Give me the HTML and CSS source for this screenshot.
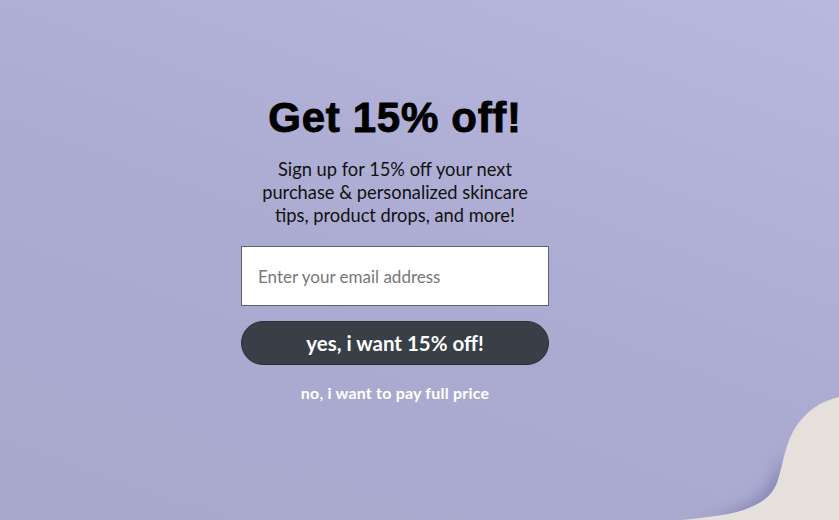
FILE: index.html
```html
<!DOCTYPE html>
<html lang="en">
<head>
    <meta charset="UTF-8">
    <meta name="viewport" content="width=device-width, initial-scale=1.0">
    <title>Get 15% off!</title>
    <link rel="stylesheet" href="styles.css">
</head>
<body>

<div class="backdrop">
    <svg class="swoosh" viewBox="0 0 200 140" width="200" height="140" aria-hidden="true">
        <defs>
            <filter id="soft" x="-30%" y="-30%" width="160%" height="160%">
                <feGaussianBlur stdDeviation="7"/>
            </filter>
        </defs>
        <!-- shade under the fold -->
        <path d="M146 70 C136 92 132 108 116 120 C98 132 80 136 60 140 L110 140 C130 132 142 118 146 100 Z" fill="#7676aa" opacity="0.7" filter="url(#soft)"/>
        <!-- cream card peeking in -->
        <path d="M200 17 C180 22 170 30 158 45 C146 62 144 85 139 100 C135 112 128 120 112 127 C95 135 70 137 43 140 L200 140 Z" fill="#e6e0dc"/>
    </svg>
</div>

<div class="signup">
    <h1>Get 15% off!</h1>
    <p class="pitch">Sign up for 15% off your next purchase &amp; personalized skincare tips, product drops, and more!</p>
    <form action="#" method="post">
        <input type="email" name="email" placeholder="Enter your email address">
        <button type="submit">yes, i want 15% off!</button>
    </form>
    <a href="#" class="decline">no, i want to pay full price</a>
</div>

</body>
</html>
```

FILE: styles.css
```css
body {
    margin: 0;
    padding: 0 49px 0 0;
    height: 100vh;
    overflow: hidden;
    font-family: 'Lato', 'Open Sans', sans-serif;
    background: linear-gradient(20deg, #a8a8cd 0%, #ababd1 45%, #b8b8de 100%);
    display: flex;
    justify-content: center;
    position: relative;
}
.backdrop {
    position: absolute;
    inset: 0;
    pointer-events: none;
}
.swoosh {
    position: absolute;
    right: 0;
    bottom: 0;
}
.signup {
    position: relative;
    width: 308px;
    padding-top: 93px;
    display: flex;
    flex-direction: column;
    align-items: center;
    text-align: center;
}
.signup h1 {
    margin: 0;
    font-family: 'Liberation Sans', Arial, sans-serif;
    font-weight: 700;
    font-size: 42px;
    line-height: 49px;
    letter-spacing: 0.7px;
    -webkit-text-stroke: 0.9px #000000;
    color: #000000;
    white-space: nowrap;
}
.pitch {
    margin: 16px 0 0;
    width: 290px;
    font-size: 18.3px;
    line-height: 23px;
    color: #111111;
}
.signup form {
    width: 100%;
    margin-top: 19px;
    display: flex;
    flex-direction: column;
    gap: 15px;
}
.signup input {
    box-sizing: border-box;
    width: 100%;
    height: 60px;
    padding: 0 16px;
    border: 1px solid #5d6470;
    border-radius: 0;
    background-color: #ffffff;
    font-family: inherit;
    font-size: 17px;
    color: #222222;
    outline: none;
}
.signup input::placeholder {
    color: #777777;
}
.signup button {
    width: 100%;
    height: 44px;
    border: 1px solid #2b3137;
    border-radius: 22px;
    background-color: #383f46;
    color: #ffffff;
    font-family: inherit;
    font-size: 20.5px;
    font-weight: 700;
    cursor: pointer;
}
.decline {
    margin-top: 18px;
    font-size: 16px;
    letter-spacing: 0.2px;
    font-weight: 700;
    color: #ffffff;
    text-decoration: none;
}
```
